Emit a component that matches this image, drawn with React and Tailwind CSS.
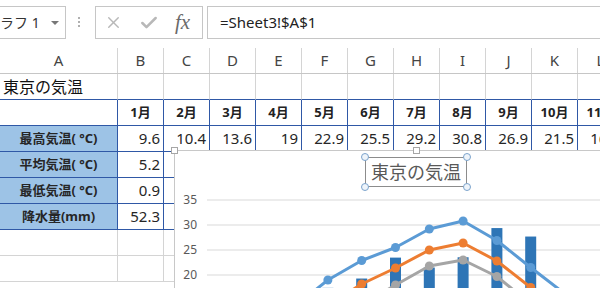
import React from 'react';
import { X, Check } from 'lucide-react';

const cols = ['A', 'B', 'C', 'D', 'E', 'F', 'G', 'H', 'I', 'J', 'K', 'L'];
const months = ['1月', '2月', '3月', '4月', '5月', '6月', '7月', '8月', '9月', '10月', '11月'];
const highs = [9.6, 10.4, 13.6, 19, 22.9, 25.5, 29.2, 30.8, 26.9, 21.5, 16.3, 11.9];
const avgs = [5.2, 5.7, 8.7, 13.9, 18.2, 21.4, 25.0, 26.4, 22.8, 17.5, 12.1, 7.6];
const lows = [0.9, 1.7, 4.4, 9.4, 14.0, 18.0, 21.8, 23.0, 19.7, 14.2, 8.3, 3.5];
const rain = [52.3, 56.1, 117.5, 124.5, 137.8, 167.7, 153.5, 168.2, 209.9, 197.8, 92.5, 51.0];

const rows = [
  { label: '最高気温( °C)', values: highs },
  { label: '平均気温( °C)', values: avgs },
  { label: '最低気温( °C)', values: lows },
  { label: '降水量(mm)', values: rain },
];

const font = "font-['Noto_Sans','Noto_Sans_CJK_JP',sans-serif]";
const colW = (i) => (i === 0 ? 'w-[118px]' : 'w-[46px]');

// chart helpers, page coordinates
const mx = (i) => 226.5 + 33.8 * i;
const ty = (v) => 375 - 5 * v;
const ry = (v) => 375 - 0.7 * v;
const pts = (arr) => arr.map((v, i) => `${mx(i)},${ty(v)}`).join(' ');

const Series = ({ data, color }) => (
  <g>
    <polyline points={pts(data)} fill="none" stroke={color} strokeWidth="3" strokeLinejoin="round" />
    {data.map((v, i) => (
      <circle key={i} cx={mx(i)} cy={ty(v)} r="4.5" fill={color} />
    ))}
  </g>
);

const Handle = ({ className }) => (
  <span className={`absolute w-[7px] h-[7px] bg-white border border-[#a6a6a6] ${className}`} />
);

const Dot = ({ className }) => (
  <span className={`absolute w-[8px] h-[8px] rounded-full bg-[#eef4fa] border border-[#7ba3cc] ${className}`} />
);

const Chart = () => (
  <div className="absolute left-[174px] top-[150px] w-[480px] h-[160px] bg-white border-t border-l border-[#c8c8c8]">
    <Handle className="-left-[4px] -top-[4px]" />
    <Handle className="left-[238px] -top-[4px]" />
    <svg className="absolute left-0 top-0" width="480" height="140" viewBox="175 151 480 140">
      {[200, 225, 250, 275].map((y) => (
        <line key={y} x1="207" x2="660" y1={y} y2={y} stroke="#d9d9d9" strokeWidth="1" />
      ))}
      {['35', '30', '25', '20'].map((t, i) => (
        <text key={t} x="197" y={204 + i * 25} textAnchor="end" fontSize="12" fill="#595959" fontFamily="Noto Sans, sans-serif">
          {t}
        </text>
      ))}
      {rain.map((p, i) => (
        <rect key={i} x={mx(i) - 5.5} y={ry(p)} width="11" height={375 - ry(p)} fill="#2e75b6" />
      ))}
      <Series data={lows} color="#a5a5a5" />
      <Series data={avgs} color="#ed7d31" />
      <Series data={highs} color="#5b9bd5" />
    </svg>
    <div className="absolute left-[190px] top-[6px] w-[102px] h-[30px] border border-[#8c8c8c] flex items-center justify-center">
      <span className={`${font} text-[18px] leading-none text-[#595959]`}>東京の気温</span>
      <Dot className="-left-[5px] -top-[5px]" />
      <Dot className="-right-[5px] -top-[5px]" />
      <Dot className="-left-[5px] -bottom-[5px]" />
      <Dot className="-right-[5px] -bottom-[5px]" />
    </div>
  </div>
);

const FormulaBar = () => (
  <div className="flex items-start h-[48px] pt-[6px]">
    <div className="-ml-px w-[67px] h-[33px] border border-[#c6c6c6] flex items-center justify-between overflow-hidden">
      <span className="-ml-[14px] text-[14px] text-[#333] whitespace-nowrap">グラフ 1</span>
      <span className="mr-[6px] w-0 h-0 border-l-[4px] border-r-[4px] border-t-[4px] border-l-transparent border-r-transparent border-t-[#777]" />
    </div>
    <div className="ml-[12px] mt-[11px] flex flex-col gap-[2px]">
      <span className="w-[2px] h-[2px] bg-[#b0b0b0]" />
      <span className="w-[2px] h-[2px] bg-[#b0b0b0]" />
      <span className="w-[2px] h-[2px] bg-[#b0b0b0]" />
    </div>
    <div className="ml-[15px] w-[108px] h-[33px] border border-[#c6c6c6] flex items-center">
      <X size={19} color="#b8b8b8" strokeWidth={1.8} className="ml-[8px]" />
      <Check size={20} color="#b8b8b8" strokeWidth={3} className="ml-[16px]" />
      <span className="ml-[16px] font-['Liberation_Serif',serif] italic text-[21px] text-[#6a6a6a] leading-none">fx</span>
    </div>
    <div className="ml-[4px] flex-1 h-[33px] border border-[#c6c6c6] border-r-0 flex items-center pl-[12px]">
      <span className="text-[15px] text-[#222]">=Sheet3!$A$1</span>
    </div>
  </div>
);

const App = () => (
  <div className={`relative w-[600px] h-[288px] overflow-hidden bg-white ${font}`}>
    <FormulaBar />
    <div className="flex h-[26px] border-b border-[#c6c6c6]">
      {cols.map((c, i) => (
        <div key={c} className={`${colW(i)} shrink-0 border-r border-[#d4d4d4] flex items-center justify-center text-[15px] text-[#444]`}>
          {c}
        </div>
      ))}
    </div>
    <div className="flex h-[26px]">
      {cols.map((c, i) => (
        <div key={c} className={`${colW(i)} shrink-0 border-r border-b border-r-[#d4d4d4] border-b-[#2f58a6] flex items-center`}>
          {i === 0 ? <span className="pl-[3px] text-[16px] text-[#111]">東京の気温</span> : null}
        </div>
      ))}
    </div>
    <div className="flex h-[26px]">
      {cols.map((c, i) => (
        <div key={c} className={`${colW(i)} shrink-0 border-r border-b border-[#2f58a6] flex items-center justify-center text-[13px] font-bold text-[#222]`}>
          {i === 0 ? '' : months[i - 1] || ''}
        </div>
      ))}
    </div>
    {rows.map((row) => (
      <div key={row.label} className="flex h-[26px]">
        {cols.map((c, i) =>
          i === 0 ? (
            <div key={c} className="w-[118px] shrink-0 border-r border-b border-[#2f58a6] bg-[#9dc3e6] flex items-center justify-center text-[13px] font-bold text-[#262626]">
              {row.label}
            </div>
          ) : (
            <div key={c} className="w-[46px] shrink-0 border-r border-b border-[#2f58a6] flex items-center justify-end pr-[3px] text-[15px] text-[#262626]">
              {row.values[i - 1]}
            </div>
          )
        )}
      </div>
    ))}
    {[0, 1].map((r) => (
      <div key={r} className="flex h-[26px]">
        {cols.map((c, i) => (
          <div key={c} className={`${colW(i)} shrink-0 border-r border-b border-[#d4d4d4]`} />
        ))}
      </div>
    ))}
    <Chart />
  </div>
);

export default App;
